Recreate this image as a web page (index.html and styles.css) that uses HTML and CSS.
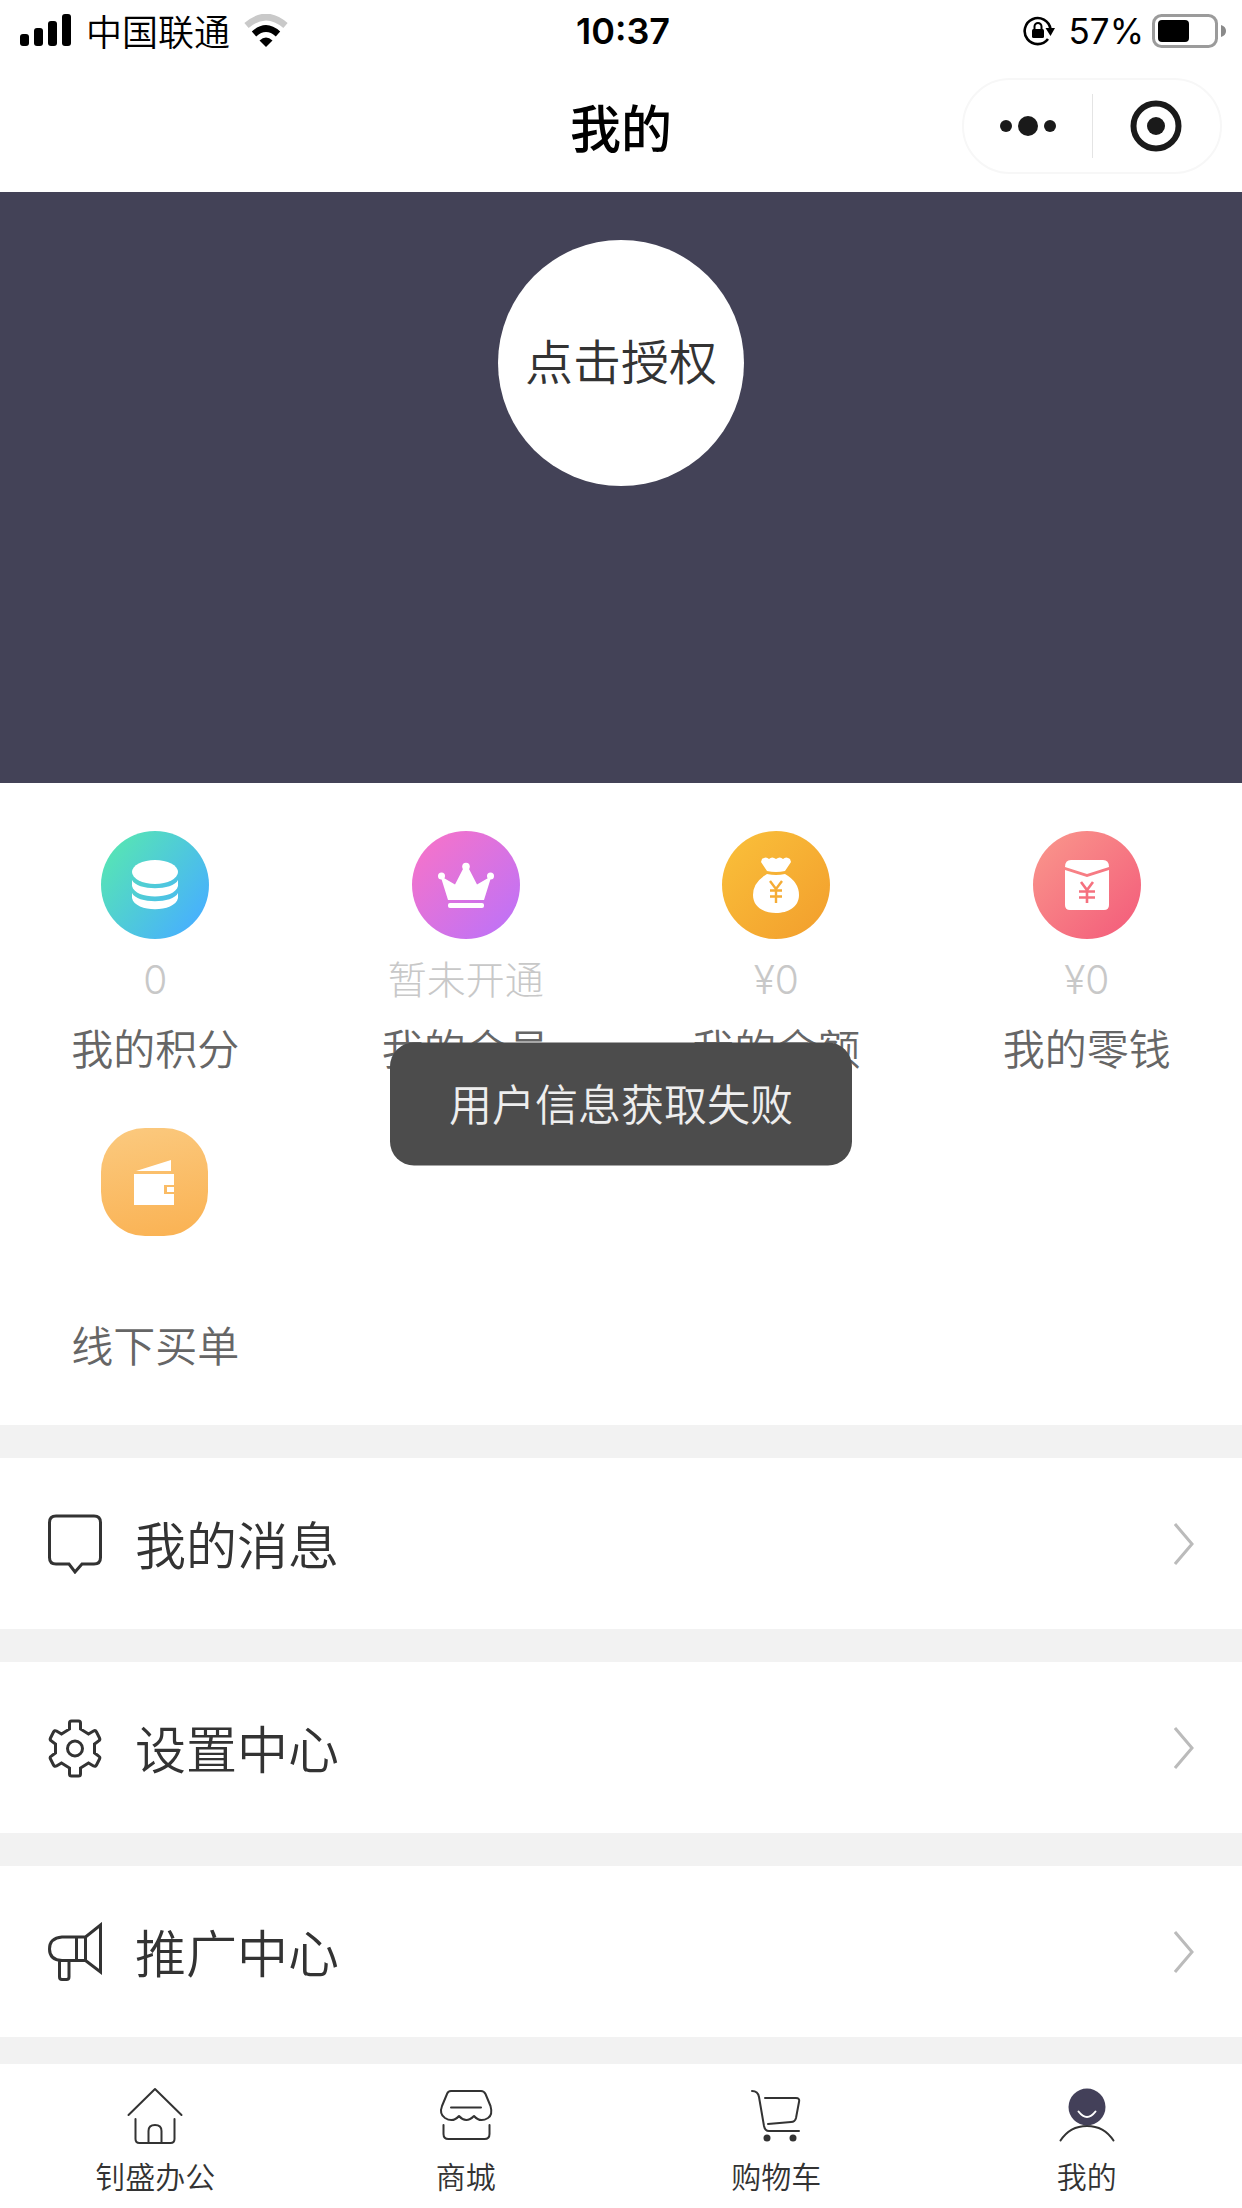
FILE: index.html
```html
<!DOCTYPE html>
<html lang="zh-CN">
<head>
<meta charset="utf-8">
<meta name="viewport" content="width=device-width, initial-scale=1">
<title>我的</title>
<link rel="stylesheet" href="styles.css">
</head>
<body>
<div class="status-bar">
  <div class="status-side">
    <svg class="signal" width="52" height="34" viewBox="0 0 52 34" aria-hidden="true">
      <rect x="0" y="20" width="9" height="12" rx="3"/><rect x="14" y="14" width="9" height="18" rx="3"/><rect x="28" y="7" width="9" height="25" rx="3"/><rect x="42" y="0" width="9" height="32" rx="3"/>
    </svg>
    <span class="carrier">中国联通</span>
    <svg class="wifi" width="44" height="34" viewBox="0 0 44 34" aria-hidden="true">
      <path d="M2.500 11.500Q22-5.500 41.500 11.500" fill="none" stroke="#c9c9c9" stroke-width="6.500"/>
      <path d="M10 20Q22 9 34 20" fill="none" stroke="#000" stroke-width="6.500"/>
      <path d="M15.500 26.500Q22 20.500 28.500 26.500L22 33z"/>
    </svg>
  </div>
  <time class="clock">10:37</time>
  <div class="status-side status-right">
    <svg class="rotation" width="32" height="32" viewBox="0 0 32 32" aria-hidden="true">
      <path d="M27.500 14A13 13 0 1 0 25 24" fill="none" stroke="#000" stroke-width="2.600"/>
      <path d="M22.500 13h9.500l-4.500 8z"/>
      <rect x="9" y="14" width="12" height="9" rx="1.500"/>
      <path d="M11.500 15v-3.500a3.500 3.500 0 0 1 7 0V15" fill="none" stroke="#000" stroke-width="2"/>
    </svg>
    <span class="percent">57%</span>
    <svg class="battery" width="74" height="34" viewBox="0 0 74 34" aria-hidden="true">
      <rect x="1.500" y="1.500" width="63" height="31" rx="8" fill="none" stroke="#9b9b9b" stroke-width="3"/>
      <rect x="6" y="6" width="31" height="22" rx="4"/>
      <path d="M69 11q5 1.500 5 6t-5 6z" fill="#8a8a8a"/>
    </svg>
  </div>
</div>

<header class="nav-bar">
  <h1 class="nav-title">我的</h1>
  <div class="capsule">
    <button class="capsule-button" type="button" aria-label="更多">
      <svg width="58" height="22" viewBox="0 0 58 22"><circle cx="7" cy="11" r="6"/><circle cx="29" cy="11" r="10"/><circle cx="51" cy="11" r="6"/></svg>
    </button>
    <button class="capsule-button" type="button" aria-label="关闭">
      <svg width="52" height="52" viewBox="0 0 52 52"><circle cx="26" cy="26" r="22.500" fill="none" stroke="#1a1a1a" stroke-width="6"/><circle cx="26" cy="26" r="9"/></svg>
    </button>
  </div>
</header>

<main class="content">
  <section class="profile">
    <button class="authorize" type="button">点击授权</button>
  </section>

  <nav class="assets" aria-label="资产">
    <a class="asset" href="#points">
      <svg class="asset-icon" viewBox="0 0 108 108" aria-hidden="true">
        <defs><linearGradient id="teal" x1="0.100" y1="0.200" x2="0.900" y2="0.800"><stop offset="0" stop-color="#56e2b8"/><stop offset="1" stop-color="#48b2fb"/></linearGradient></defs>
        <circle cx="54" cy="54" r="54" fill="url(#teal)"/>
        <g fill="#fff"><ellipse cx="54" cy="41" rx="23" ry="12"/><path d="M31 49C36 60 72 60 77 49V55C74 69 34 69 31 55zM31 62C36 73 72 73 77 62V67C74 82 34 82 31 67z"/></g>
      </svg>
      <span class="asset-value">0</span>
      <span class="asset-label">我的积分</span>
    </a>
    <a class="asset" href="#member">
      <svg class="asset-icon" viewBox="0 0 108 108" aria-hidden="true">
        <defs><linearGradient id="purple" x1="0.100" y1="0.100" x2="0.900" y2="0.900"><stop offset="0" stop-color="#f473cb"/><stop offset="1" stop-color="#c072f6"/></linearGradient></defs>
        <circle cx="54" cy="54" r="54" fill="url(#purple)"/>
        <g fill="#fff"><circle cx="54" cy="35.500" r="3.800"/><circle cx="29.500" cy="45" r="3.500"/><circle cx="78.500" cy="45" r="3.500"/><path d="M52 36h4L65 53.500l12-7h2L72 69H36L29 46.500h2l12 7z"/><rect x="36" y="72" width="36" height="5" rx="2"/></g>
      </svg>
      <span class="asset-value">暂未开通</span>
      <span class="asset-label">我的会员</span>
    </a>
    <a class="asset" href="#balance">
      <svg class="asset-icon" viewBox="0 0 108 108" aria-hidden="true">
        <defs><linearGradient id="gold" x1="0.100" y1="0.100" x2="0.900" y2="0.900"><stop offset="0" stop-color="#f9bd39"/><stop offset="1" stop-color="#f3a12e"/></linearGradient></defs>
        <circle cx="54" cy="54" r="54" fill="url(#gold)"/>
        <path d="M40 28q4-3 7 0 3-3 7 0 4-3 7 0 3-3 7 0l1 3-6 9q-9 2-18 0l-6-9z" fill="#fff"/>
        <path d="M45 43q9 2 18 0 14 8 14 21c0 12-11 18-23 18s-23-6-23-18q0-13 14-21z" fill="#fff"/>
        <path d="M48 50l6 8 6-8M54 58v14M48 59.500h12M48 65.500h12" fill="none" stroke="#f5ac35" stroke-width="2.400"/>
      </svg>
      <span class="asset-value">¥0</span>
      <span class="asset-label">我的余额</span>
    </a>
    <a class="asset" href="#change">
      <svg class="asset-icon" viewBox="0 0 108 108" aria-hidden="true">
        <defs><linearGradient id="rose" x1="0.100" y1="0.100" x2="0.900" y2="0.900"><stop offset="0" stop-color="#f9928a"/><stop offset="1" stop-color="#f4607c"/></linearGradient></defs>
        <circle cx="54" cy="54" r="54" fill="url(#rose)"/>
        <path d="M32 36q0-7 6-7h32q6 0 6 7L54 43z" fill="#fff"/>
        <path d="M32 39l22 7 22-7v35q0 5-5 5H37q-5 0-5-5z" fill="#fff"/>
        <path d="M48 51l6 8 6-8M54 59v13M46 60.500h16M46 66.500h16" fill="none" stroke="#f5717f" stroke-width="2.600"/>
      </svg>
      <span class="asset-value">¥0</span>
      <span class="asset-label">我的零钱</span>
    </a>
    <a class="asset" href="#offline-pay">
      <svg class="asset-icon" viewBox="0 0 108 108" aria-hidden="true">
        <defs><linearGradient id="amber" x1="0.400" y1="0" x2="0.600" y2="1"><stop offset="0" stop-color="#fbc87c"/><stop offset="1" stop-color="#fab355"/></linearGradient></defs>
        <rect width="107" height="108" rx="44" fill="url(#amber)"/>
        <path d="M35 43L70 32v11zM33 46h40v11H63v9h10v11H33z" fill="#fff"/>
        <rect x="66" y="59" width="7" height="5" fill="#fff"/>
      </svg>
      <span class="asset-value"></span>
      <span class="asset-label">线下买单</span>
    </a>
  </nav>

  <nav class="menu" aria-label="功能">
    <a class="menu-row" href="#messages">
      <svg class="menu-icon" viewBox="0 0 54 60" aria-hidden="true"><path d="M8 2h38q6.500 0 6.500 6.500v35q0 6.500-6.500 6.500H34l-7 8-6-8H8q-6.500 0-6.500-6.500v-35Q1.500 2 8 2z"/></svg>
      <span class="menu-label">我的消息</span>
      <svg class="chevron" viewBox="0 0 20 42" aria-hidden="true"><path d="M1 1l17 20L1 41"/></svg>
    </a>
    <a class="menu-row" href="#settings">
      <svg class="menu-icon" viewBox="0 0 54 60" aria-hidden="true"><path d="M21.500 5q0-2 2-2h7q2 0 2 2v6l8 5 5-3q2-1 3 1l3 6q1 2-1 3l-4 3v9l4 3q2 1 1 3l-3 6q-1 2-3 1l-5-3-8 5v6q0 2-2 2h-7q-2 0-2-2v-6l-8-5-5 3q-2 1-3-1l-3-6q-1-2 1-3l4-3v-9l-4-3q-2-1-1-3l3-6q1-2 3-1l5 3 8-5z"/><circle cx="27" cy="30.500" r="7.500"/></svg>
      <span class="menu-label">设置中心</span>
      <svg class="chevron" viewBox="0 0 20 42" aria-hidden="true"><path d="M1 1l17 20L1 41"/></svg>
    </a>
    <a class="menu-row" href="#promotion">
      <svg class="menu-icon" viewBox="0 0 54 60" aria-hidden="true"><path d="M37.500 15H14Q1.500 16 1.500 27T14 38.500h23.500zM28.500 15v23.500M37.500 15L52.500 3v47l-15-11.500M11.500 39v16q0 2.500 2.500 2.500h4.500q2.500 0 2.500-2.500V39"/></svg>
      <span class="menu-label">推广中心</span>
      <svg class="chevron" viewBox="0 0 20 42" aria-hidden="true"><path d="M1 1l17 20L1 41"/></svg>
    </a>
  </nav>
</main>

<nav class="tab-bar" aria-label="主导航">
  <a class="tab" href="#home">
    <svg class="tab-icon" viewBox="0 0 56 56" aria-hidden="true"><path d="M1.500 27L28 1l26.500 26M8.500 31v20q0 4 4 4h31q4 0 4-4V31M21.500 55V43q0-6 6.500-6t6.500 6v12"/></svg>
    <span>钊盛办公</span>
  </a>
  <a class="tab" href="#mall">
    <svg class="tab-icon" viewBox="0 0 56 56" aria-hidden="true"><path d="M13 3h30q3 0 4.500 3l5 12q2.500 9-2.500 12-8 5-14-2-8 8-15 0-6 7-14 2-6-4-3-12l5-12q1-3 4-3zM13 19.500h30M5.500 37v9q0 5 5 5h36q5 0 5-5v-9"/></svg>
    <span>商城</span>
  </a>
  <a class="tab" href="#cart">
    <svg class="tab-icon" viewBox="0 0 56 56" aria-hidden="true"><path d="M4 3q6 0 7 6l5 29q1 5 5 5h30M17 10h31q4 0 3 4l-3 16q-1 4-5 4l-23 2"/><g fill="#333" stroke="none"><circle cx="19" cy="50" r="3.500"/><circle cx="45" cy="50" r="3.500"/></g></svg>
    <span>购物车</span>
  </a>
  <a class="tab tab-active" href="#mine" aria-current="page">
    <svg class="tab-icon" viewBox="0 0 56 56" aria-hidden="true"><path d="M1.500 52.500C14 33 42 33 54.500 52.500"/><circle cx="28" cy="19" r="18.500" fill="#434059" stroke="none"/><path d="M19.500 23.500q8.500 11 17 0" stroke="#fff"/></svg>
    <span>我的</span>
  </a>
</nav>

<div class="toast" role="status">用户信息获取失败</div>
</body>
</html>
```
FILE: styles.css
```css
* {
  box-sizing: border-box;
}

body {
  margin: 0;
  min-height: 100vh;
  display: flex;
  flex-direction: column;
  background: #fff;
  color: #333;
  font-family: "Noto Sans CJK SC", sans-serif;
  font-weight: 350;
}

a {
  color: inherit;
  text-decoration: none;
}

button {
  margin: 0;
  padding: 0;
  border: 0;
  background: none;
  color: inherit;
  font: inherit;
}

svg {
  display: block;
  flex: none;
}

/* Status bar */
.status-bar {
  height: 62px;
  padding: 0 16px 0 20px;
  display: flex;
  align-items: center;
  color: #000;
  font-size: 36px;
  line-height: 60px;
}

.status-side {
  flex: 1;
  display: flex;
  align-items: center;
  gap: 14px;
}

.status-right {
  justify-content: flex-end;
}

.carrier {
  padding-bottom: 3px;
}

.clock,
.percent {
  font-family: Inter, sans-serif;
  font-weight: 400;
}

.clock {
  font-weight: 600;
}

.percent {
  font-size: 35px;
}

.battery {
  margin-left: -6px;
}

/* Navigation bar */
.nav-bar {
  height: 130px;
  padding: 0 20px 3px;
  display: grid;
  grid-template-columns: 1fr auto 1fr;
  align-items: center;
}

.nav-title {
  grid-column: 2;
  margin: 0;
  color: #000;
  font-size: 51px;
  font-weight: 500;
  line-height: 72px;
}

.capsule {
  justify-self: end;
  width: 260px;
  height: 96px;
  display: flex;
  align-items: center;
  border: 2px solid #f7f7f7;
  border-radius: 48px;
}

.capsule-button {
  flex: 1;
  height: 64px;
  display: flex;
  align-items: center;
  justify-content: center;
  fill: #1a1a1a;
}

.capsule-button + .capsule-button {
  border-left: 1px solid #e4e4e4;
}

/* Profile */
.content {
  flex: 1;
  background: #f2f2f2;
}

.profile {
  height: 591px;
  padding-top: 48px;
  display: flex;
  justify-content: center;
  align-items: flex-start;
  background: #434257;
}

.authorize {
  width: 246px;
  height: 246px;
  padding-bottom: 8px;
  border-radius: 50%;
  background: #fff;
  font-size: 48px;
}

/* Assets */
.assets {
  padding: 48px 0 54px;
  display: grid;
  grid-template-columns: repeat(4, 1fr);
  row-gap: 54px;
  background: #fff;
}

.asset {
  display: flex;
  flex-direction: column;
  align-items: center;
}

.asset-icon {
  width: 108px;
  height: 108px;
}

.asset-value {
  height: 54px;
  margin: 14px 0 13px;
  color: #c8c8c8;
  font-family: Inter, "Noto Sans CJK SC", sans-serif;
  font-size: 39px;
  font-weight: 300;
  line-height: 54px;
}

.asset-label {
  color: #666;
  font-size: 42px;
  line-height: 54px;
}

/* Menu */
.menu {
  padding: 33px 0 27px;
  display: flex;
  flex-direction: column;
  gap: 33px;
}

.menu-row {
  height: 171px;
  padding: 0 48px;
  display: flex;
  align-items: center;
  gap: 33px;
  background: #fff;
}

.menu-icon {
  width: 54px;
  height: 60px;
  fill: none;
  stroke: #333;
  stroke-width: 3;
}

.menu-label {
  flex: 1;
  padding-bottom: 2px;
  font-size: 51px;
  line-height: 72px;
}

.chevron {
  width: 20px;
  height: 42px;
  fill: none;
  stroke: #bbb;
  stroke-width: 3;
}

/* Tab bar */
.tab-bar {
  height: 144px;
  padding-top: 24px;
  display: grid;
  grid-template-columns: repeat(4, 1fr);
  background: #fff;
}

.tab {
  display: flex;
  flex-direction: column;
  align-items: center;
  gap: 10px;
  font-size: 30px;
  line-height: 42px;
}

.tab-icon {
  width: 56px;
  height: 56px;
  fill: none;
  stroke: #333;
  stroke-width: 2;
  stroke-linecap: round;
  stroke-linejoin: round;
  overflow: visible;
}

/* Toast */
.toast {
  position: fixed;
  top: 50%;
  left: 50%;
  transform: translate(-50%, -50%);
  padding: 28px 59px 32px;
  border-radius: 24px;
  background: #4c4c4c;
  color: #eee;
  font-size: 43px;
  line-height: 63px;
  white-space: nowrap;
}
```
